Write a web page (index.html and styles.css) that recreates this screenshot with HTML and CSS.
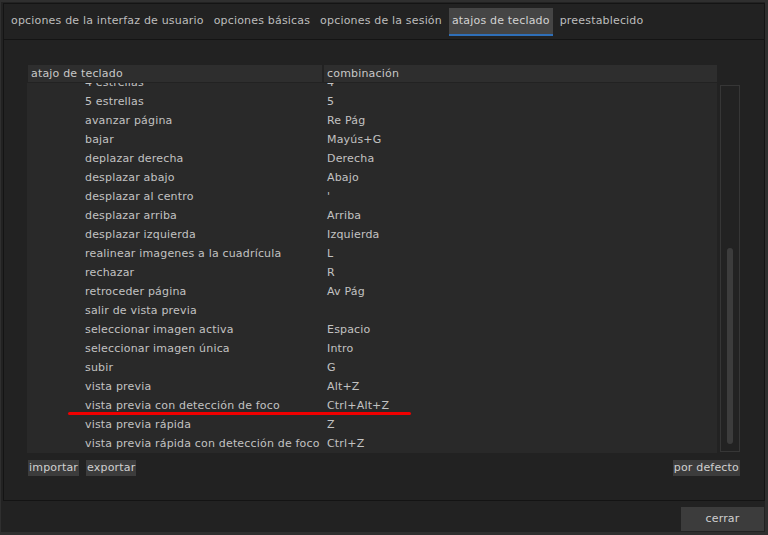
FILE: index.html
```html
<!DOCTYPE html>
<html lang="es">
<head>
<meta charset="utf-8">
<title>preferencias</title>
<link rel="stylesheet" href="styles.css">
</head>
<body>
<div class="window">
  <div class="notebook">
    <div class="tabbar">
      <div class="tab">opciones de la interfaz de usuario</div>
      <div class="tab">opciones básicas</div>
      <div class="tab">opciones de la sesión</div>
      <div class="tab active">atajos de teclado</div>
      <div class="tab">preestablecido</div>
    </div>
    <div class="page">
      <div class="content">
        <div class="tablerow">
          <div class="table">
            <div class="thead">
              <div class="th th-name">atajo de teclado</div>
              <div class="th th-key">combinación</div>
            </div>
            <div class="tbody">
              <div class="rows">
                <div class="row"><span class="c1">4 estrellas</span><span class="c2">4</span></div>
                <div class="row"><span class="c1">5 estrellas</span><span class="c2">5</span></div>
                <div class="row"><span class="c1">avanzar página</span><span class="c2">Re Pág</span></div>
                <div class="row"><span class="c1">bajar</span><span class="c2">Mayús+G</span></div>
                <div class="row"><span class="c1">deplazar derecha</span><span class="c2">Derecha</span></div>
                <div class="row"><span class="c1">desplazar abajo</span><span class="c2">Abajo</span></div>
                <div class="row"><span class="c1">desplazar al centro</span><span class="c2">'</span></div>
                <div class="row"><span class="c1">desplazar arriba</span><span class="c2">Arriba</span></div>
                <div class="row"><span class="c1">desplazar izquierda</span><span class="c2">Izquierda</span></div>
                <div class="row"><span class="c1">realinear imagenes a la cuadrícula</span><span class="c2">L</span></div>
                <div class="row"><span class="c1">rechazar</span><span class="c2">R</span></div>
                <div class="row"><span class="c1">retroceder página</span><span class="c2">Av Pág</span></div>
                <div class="row"><span class="c1">salir de vista previa</span><span class="c2"></span></div>
                <div class="row"><span class="c1">seleccionar imagen activa</span><span class="c2">Espacio</span></div>
                <div class="row"><span class="c1">seleccionar imagen única</span><span class="c2">Intro</span></div>
                <div class="row"><span class="c1">subir</span><span class="c2">G</span></div>
                <div class="row"><span class="c1">vista previa</span><span class="c2">Alt+Z</span></div>
                <div class="row"><span class="c1">vista previa con detección de foco</span><span class="c2">Ctrl+Alt+Z</span></div>
                <div class="row"><span class="c1">vista previa rápida</span><span class="c2">Z</span></div>
                <div class="row"><span class="c1">vista previa rápida con detección de foco</span><span class="c2">Ctrl+Z</span></div>
              </div>
            </div>
          </div>
          <div class="scrollbar"><div class="thumb"></div></div>
        </div>
        <div class="actions">
          <button class="btn">importar</button>
          <button class="btn">exportar</button>
          <span class="spacer"></span>
          <button class="btn">por defecto</button>
        </div>
      </div>
    </div>
  </div>
  <div class="footer">
    <button class="close">cerrar</button>
  </div>
  <div class="annotation"></div>
</div>
</body>
</html>
```

FILE: styles.css
```css
html, body {
  margin: 0;
  padding: 0;
}
body {
  width: 768px;
  height: 535px;
  background: #2f2f2f;
  overflow: hidden;
  font-family: "DejaVu Sans", "Liberation Sans", sans-serif;
  font-size: 11px;
  letter-spacing: 0.18px;
  color: #c2c2c2;
}
.window {
  position: relative;
  margin: 2px 3px 3px 1px;
  height: 530px;
  background: #222222;
  padding: 1px 0 0 2px;
  box-sizing: border-box;
  display: flex;
  flex-direction: column;
}
.notebook {
  height: 498px;
  border: 1px solid #141414;
  box-sizing: border-box;
  display: flex;
  flex-direction: column;
}
.tabbar {
  height: 36px;
  box-sizing: border-box;
  border-bottom: 1px solid #141414;
  display: flex;
  gap: 4px;
  padding: 4px 0 0 4px;
}
.tab {
  height: 28px;
  line-height: 26px;
  padding: 0 3px;
  box-sizing: border-box;
  border-bottom: 2px solid transparent;
  color: #bdbdbd;
  white-space: nowrap;
}
.tab.active {
  background: #454545;
  border-bottom-color: #2f6fb8;
  color: #d2d2d2;
}
.page {
  flex: 1;
  padding: 25px 0 0 23px;
}
.content {
  width: 713px;
  display: flex;
  flex-direction: column;
}
.tablerow {
  display: flex;
  gap: 3px;
}
.table {
  width: 690px;
  display: flex;
  flex-direction: column;
}
.thead {
  height: 17px;
  display: flex;
  gap: 2px;
  padding-left: 1px;
}
.th {
  background: #2e2e2e;
  line-height: 17px;
  padding-left: 3px;
  box-sizing: border-box;
  color: #c8c8c8;
  white-space: nowrap;
}
.th-name { width: 294px; }
.th-key { flex: 1; }
.tbody {
  margin-top: 1px;
  height: 370px;
  background: #292929;
  overflow: hidden;
}
.rows {
  margin-top: -10px;
}
.row {
  height: 19px;
  line-height: 19px;
  display: flex;
  white-space: nowrap;
}
.c1 {
  width: 296px;
  padding-left: 58px;
  box-sizing: border-box;
}
.c2 {
  padding-left: 4px;
}
.scrollbar {
  width: 20px;
  height: 367px;
  margin-top: 20px;
  border: 1px solid #363636;
  background: #222222;
  box-sizing: border-box;
  display: flex;
  justify-content: center;
  padding-top: 162px;
}
.thumb {
  width: 6px;
  height: 196px;
  border-radius: 3px;
  background: #3c3c3c;
}
.actions {
  display: flex;
  gap: 7px;
  margin-top: 7px;
  padding-left: 1px;
}
.spacer { flex: 1; }
.btn {
  font: inherit;
  letter-spacing: 0.18px;
  color: #d0d0d0;
  background: #3c3c3c;
  border: none;
  padding: 0 1px;
  height: 16px;
  line-height: 16px;
  margin: 0;
}
.footer {
  flex: 1;
  display: flex;
  justify-content: flex-end;
  align-items: flex-start;
  padding: 6px 1px 0 0;
}
.close {
  font: inherit;
  letter-spacing: inherit;
  color: #cfcfcf;
  background: #3c3c3c;
  border: none;
  width: 83px;
  height: 24px;
  margin: 0;
  padding: 0 0 1px 0;
}
.annotation {
  position: absolute;
  left: 67px;
  top: 410px;
  width: 343px;
  height: 3px;
  border-radius: 2px;
  background: #f00000;
}
```
